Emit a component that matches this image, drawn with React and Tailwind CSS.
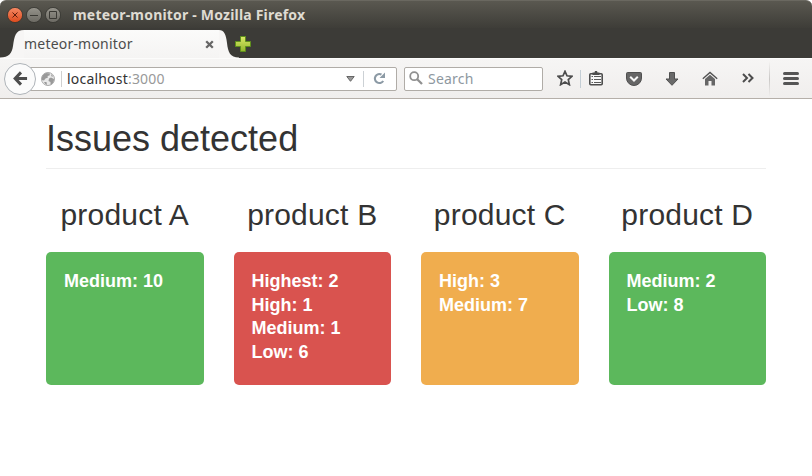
import React from "react";

const products = [
  { name: "product A", color: "bg-[#5cb85c]", issues: ["Medium: 10"] },
  { name: "product B", color: "bg-[#d9534f]", issues: ["Highest: 2", "High: 1", "Medium: 1", "Low: 6"] },
  { name: "product C", color: "bg-[#f0ad4e]", issues: ["High: 3", "Medium: 7"] },
  { name: "product D", color: "bg-[#5cb85c]", issues: ["Medium: 2", "Low: 8"] },
];

function WindowButton({ close, children }) {
  return (
    <svg className="size-4 shrink-0" viewBox="0 0 16 16" fill="none">
      <defs>
        <linearGradient id={close ? "wbc" : "wbg"} x1="0" y1="0" x2="0" y2="1">
          <stop offset="0" stopColor={close ? "#f68a65" : "#96948c"} />
          <stop offset="1" stopColor={close ? "#dd4a1c" : "#6b6962"} />
        </linearGradient>
      </defs>
      <circle cx="8" cy="8" r="7.6" fill={close ? "url(#wbc)" : "url(#wbg)"} stroke="#34332e" strokeWidth="0.8" />
      <g stroke={close ? "#5c1e0c" : "#3a3934"} strokeWidth="1">{children}</g>
    </svg>
  );
}

function TitleBar() {
  return (
    <div className="flex h-7 items-center bg-gradient-to-b from-[#5a5850] to-[#3e3d38] pl-[7px] rounded-t-[6px] border-t border-[#6a6860]">
      <div className="flex gap-[3px]">
        <WindowButton close><path d="M5.5 5.5l5 5M10.5 5.5l-5 5" /></WindowButton>
        <WindowButton><path d="M4 8.500h8" /></WindowButton>
        <WindowButton><path d="M4.500 4.500h7v7h-7z" /></WindowButton>
      </div>
      <span className="ml-[12px] whitespace-nowrap text-[14px] leading-5 font-bold tracking-[0.200px] text-[#dfdbd2]">
        meteor-monitor - Mozilla Firefox
      </span>
    </div>
  );
}

function TabStrip() {
  return (
    <div className="flex h-[30px] bg-[#3c3b37]">
      <svg className="h-[30px] w-6 shrink-0" viewBox="0 0 24 30">
        <path d="M0 30V29.5C9 29.5 12 25 13 18C14.500 8 15.500 2 24 2V30Z" fill="#f7f6f5" />
      </svg>
      <div className="mt-[2px] flex h-7 w-[195px] items-center bg-gradient-to-b from-[#fbfbfa] to-[#f5f4f3]">
        <span className="w-[181px] whitespace-nowrap text-[14px] leading-5 tracking-[0.200px] text-[#4c4c4c]">meteor-monitor</span>
        <svg className="size-[9px]" viewBox="0 0 9 9">
          <path d="M1.200 1.200L7.800 7.800M7.800 1.200L1.200 7.800" stroke="#666" strokeWidth="2.300" />
        </svg>
      </div>
      <svg className="h-[30px] w-[16px] shrink-0 overflow-visible" viewBox="0 0 16 30">
        <path d="M0 2C5 2 7 6 8 15C9 24 11 29.500 20 29.500V30H0Z" fill="#f7f6f5" />
      </svg>
      <svg className="mt-[8px] size-4" viewBox="0 0 16 16">
        <defs>
          <linearGradient id="plus" x1="0" y1="0" x2="0" y2="1">
            <stop offset="0" stopColor="#dce968" />
            <stop offset="1" stopColor="#91b52c" />
          </linearGradient>
        </defs>
        <path d="M5.500.5h5v5h5v5h-5v5h-5v-5h-5v-5h5z" fill="url(#plus)" stroke="#5e8f1c" />
      </svg>
    </div>
  );
}

function Globe() {
  return (
    <svg className="size-[14px] shrink-0" viewBox="0 0 14 14">
      <circle cx="7" cy="7" r="6.500" fill="#e9e9e9" stroke="#aaa" />
      <path d="M1 8Q0 3 5 1L9 1.500L8.500 3.500L6.500 4L7 5.500L4.500 6.500L3 8.500ZM8 6.500L10 5.500L13 7Q13 11 9.500 13L9.500 10L7.500 9ZM10 2L12.500 4.500L10.500 4.500ZM3 10L5.500 10L6 13Q4 12.500 3 10Z" fill="#999" />
    </svg>
  );
}

function NavBar() {
  return (
    <div className="flex h-[41px] items-center border-t border-[#fcfcfb] border-b border-b-[#b5afa9] bg-gradient-to-b from-[#f6f5f4] to-[#f0eeed] pl-1">
      <div className="z-10 flex size-8 shrink-0 items-center justify-center rounded-full border border-[#aeb3b8] bg-[#fbfbfb]">
        <svg className="size-[15px]" viewBox="0 0 16 16" fill="none" stroke="#4d4d4d" strokeWidth="3.200">
          <path d="M8.500 1.500L2.300 8L8.500 14.500M2.500 8H15" />
        </svg>
      </div>
      <div className="-ml-2 flex h-6 w-[369px] shrink-0 items-center rounded-r-[2px] border border-[#b0aca7] bg-white pl-[12px]">
        <Globe />
        <div className="mr-[5px] ml-[6px] h-4 w-px shrink-0 bg-[#d0d0d0]" />
        <span className="w-[279px] shrink-0 whitespace-nowrap text-[14px] leading-5 tracking-[0.200px] text-[#999]">
          <span className="text-[#333]">localhost</span>:3000
        </span>
        <svg className="mt-px h-[6px] w-[9px] shrink-0" viewBox="0 0 9 6">
          <path d="M.8.5H8.200L4.500 5.300Z" fill="#999" stroke="#666" />
        </svg>
        <div className="ml-[8px] h-4 w-px shrink-0 bg-[#ccd1d5]" />
        <svg className="ml-[9px] -mt-px size-[13px] shrink-0" viewBox="0 0 13 13">
          <path d="M8.500 2.500A4.500 4.500 0 1 0 10.200 9" fill="none" stroke="#8c9aa5" strokeWidth="2.200" />
          <path d="M12 .5V6H6.500Z" fill="#8c9aa5" />
        </svg>
      </div>
      <div className="ml-[7px] flex h-6 w-[139px] shrink-0 items-center rounded-[2px] border border-[#b0aca7] bg-white pl-1">
        <svg className="-mt-[2px] size-[14px]" viewBox="0 0 14 14" fill="none" stroke="#909090">
          <circle cx="5.200" cy="5.200" r="4" strokeWidth="1.800" />
          <path d="M8.200 8.200L13 13" strokeWidth="2.300" />
        </svg>
        <span className="ml-[5px] text-[14px] leading-5 tracking-[0.200px] text-[#8e989f]">Search</span>
      </div>
      <svg className="ml-[14px] -mt-px size-4 shrink-0" viewBox="0 0 16 16">
        <path d="M8 1.300L10 5.800L15 6.300L11.300 9.600L12.400 14.700L8 12.100L3.600 14.700L4.700 9.600L1 6.300L6 5.800Z" fill="none" stroke="#4d4d4d" strokeWidth="1.700" />
      </svg>
      <div className="ml-[7px] h-[18px] w-px shrink-0 bg-[#c4ced5]" />
      <svg className="ml-[8px] -mt-[2px] h-4 w-[14px] shrink-0" viewBox="0 0 14 16">
        <rect x="0.800" y="3.800" width="12.400" height="10.900" rx="1" fill="#f8f8f8" stroke="#4d4d4d" strokeWidth="1.600" />
        <path d="M3.500 5V2.500H5.500L6 1H8L8.500 2.500H10.500V5Z" fill="#4d4d4d" />
        <path d="M2.500 6.500H4M5 6.500H12M2.500 9.500H4M5 9.500H12M2.500 12.500H4M5 12.500H12" stroke="#5a5a5a" strokeWidth="1" />
      </svg>
      <svg className="ml-[23px] h-[14px] w-4 shrink-0" viewBox="0 0 16 14">
        <path d="M1.500.5H14.500Q15.500.5 15.500 1.500V6A7.500 7.500 0 0 1 .5 6V1.500Q.5.500 1.500.500Z" fill="#666" stroke="#505050" />
        <path d="M4.200 4.800L8 8.500L11.800 4.800" fill="none" stroke="#f7f7f7" strokeWidth="2" />
      </svg>
      <svg className="ml-[23px] h-[14px] w-[14px] shrink-0" viewBox="0 0 14 14">
        <path d="M4.500.5H9.500V7H13L7 13.300L1 7H4.500Z" fill="#6a6a6a" stroke="#505050" />
      </svg>
      <svg className="ml-[23px] h-[15px] w-4 shrink-0" viewBox="0 0 16 15">
        <path d="M3 8L8 3.800L13 8V14.500H9.500V10H6.500V14.500H3Z" fill="#666" />
        <path d="M.8 7.800L8 1.400L15.200 7.800" fill="none" stroke="#505050" strokeWidth="1.300" />
      </svg>
      <svg className="ml-[24px] -mt-px h-[10px] w-3 shrink-0" viewBox="0 0 12 10">
        <path d="M1 1L5 5L1 9M6.500 1L10.500 5L6.500 9" fill="none" stroke="#4d4d4d" strokeWidth="2" />
      </svg>
      <div className="ml-[15px] h-9 w-px shrink-0 bg-gradient-to-b from-transparent via-[#c9c7c5] to-transparent" />
      <div className="-mt-px ml-[13px] flex w-4 shrink-0 flex-col gap-[2px]">
        <div className="h-[3px] rounded-full bg-[#555]" />
        <div className="h-[3px] rounded-full bg-[#555]" />
        <div className="h-[3px] rounded-full bg-[#555]" />
      </div>
    </div>
  );
}

function Product({ name, color, issues }) {
  return (
    <section>
      <h2 className="text-center text-[30px] leading-[33px] tracking-[0.200px] text-[#333]">{name}</h2>
      <div className={`mt-[21px] h-[133px] rounded-[5px] pl-[18px] pt-[18px] ${color}`}>
        {issues.map((issue) => (
          <p key={issue} className="text-[18px] leading-[23.600px] font-bold text-white">{issue}</p>
        ))}
      </div>
    </section>
  );
}

export default function App() {
  return (
    <div className="h-[476px] w-[812px] overflow-hidden bg-white font-['Liberation_Sans',Arial,sans-serif]">
      <header className="font-['Noto_Sans','Open_Sans',sans-serif]">
        <TitleBar />
        <TabStrip />
        <NavBar />
      </header>
      <main className="mx-[46px] pt-[20px]">
        <h1 className="h-[50px] border-b border-[#eee] text-[36px] leading-10 text-[#333]">Issues detected</h1>
        <div className="mt-[29px] grid grid-cols-4 gap-[30px]">
          {products.map((product) => (
            <Product key={product.name} {...product} />
          ))}
        </div>
      </main>
    </div>
  );
}
